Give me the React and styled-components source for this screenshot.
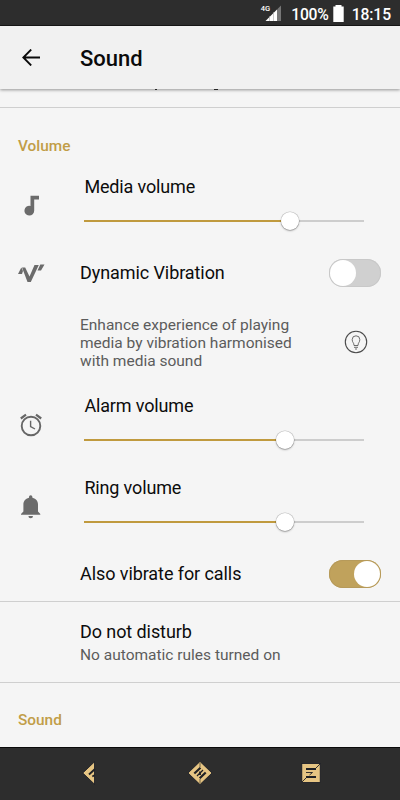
import React from "react";
import styled, { createGlobalStyle } from "styled-components";

const App = () => {
  return (
    <>
      <GlobalStyle />
      <Screen>
        <StatusBar>
          <Network>
            <span>4G</span>
            <SignalIcon />
          </Network>
          <Percent>100%</Percent>
          <BatteryIcon />
          <Clock>18:15</Clock>
        </StatusBar>

        <Header>
          <BackIcon />
          <h1>Sound</h1>
        </Header>

        <Contents>
          <ScrolledRow>
            <Descender $left={155} $width={2} />
            <Descender $left={214} $width={4} />
          </ScrolledRow>

          <Category>Volume</Category>
          <VolumeRow icon={<NoteIcon />} label="Media volume" value={205} />
          <SwitchRow>
            <IconCell>
              <WaveIcon />
            </IconCell>
            <Title>Dynamic Vibration</Title>
            <Switch>
              <Knob />
            </Switch>
          </SwitchRow>
          <DescriptionRow>
            <p>
              Enhance experience of playing
              <br />
              media by vibration harmonised
              <br />
              with media sound
            </p>
            <BulbIcon />
          </DescriptionRow>
          <VolumeRow icon={<AlarmIcon />} label="Alarm volume" value={200} />
          <VolumeRow icon={<BellIcon />} label="Ring volume" value={200} />
          <SwitchRow $line>
            <IconCell />
            <Title>Also vibrate for calls</Title>
            <Switch $on>
              <Knob />
            </Switch>
          </SwitchRow>
          <LinkRow>
            <Title>Do not disturb</Title>
            <Summary>No automatic rules turned on</Summary>
          </LinkRow>
          <Category $last>Sound</Category>
        </Contents>

        <NavBar>
          <NavBack />
          <NavHome />
          <NavRecent />
        </NavBar>
      </Screen>
    </>
  );
};

export default App;

const VolumeRow = ({ icon, label, value }) => (
  <VolumeWrap>
    <IconCell>{icon}</IconCell>
    <VolumeBody>
      <VolumeTitle>{label}</VolumeTitle>
      <Track>
        <Filled style={{ width: value }} />
        <Thumb />
      </Track>
    </VolumeBody>
  </VolumeWrap>
);

const SignalIcon = () => (
  <svg width="17" height="16" viewBox="0 0 17 16">
    <path d="M12 4.5 16 0.5V16H12Z" fill="#777" />
    <path d="M0.5 16 12 4.5V16Z" fill="#fff" />
    <path d="M4.5 11V16M8.5 7V16" stroke="#aaa" strokeWidth="0.6" />
  </svg>
);

const BatteryIcon = () => (
  <svg width="11" height="18" viewBox="0 -1 11 18">
    <path d="M2.5 0H8.5V1.5H10.7V17H0.3V1.5H2.5Z" fill="#fff" />
  </svg>
);

const BackIcon = () => (
  <svg width="18" height="17" viewBox="0 0 18 17" fill="none">
    <path d="M18 8.5H1.5M9.2 0.5 1.3 8.5 9.2 16.5" stroke="#0a0a0a" strokeWidth="1.8" />
  </svg>
);

const NoteIcon = () => (
  <svg width="26" height="26" viewBox="0 0 26 26">
    <path
      d="M12.5 2.7H21V6.5H16.2V17.5A4.9 4.9 0 1 1 12.5 12.9Z"
      fill="#6b6b6b"
    />
  </svg>
);

const WaveIcon = () => (
  <svg width="27" height="20" viewBox="0 0 27 20">
    <path
      d="M0 11 3.3 4.5 5 8 4 11ZM4 4.5H7.2L11.5 13.5 16.5 2H20.8L12.8 19H9.5ZM19.5 7.5 22.3 1.5H26.5L23 7.5Z"
      fill="#6b6b6b"
    />
  </svg>
);

const AlarmIcon = () => (
  <svg width="26" height="26" viewBox="0 0 26 26" fill="none" stroke="#666">
    <circle cx="13" cy="14" r="9.3" strokeWidth="1.9" />
    <path d="M12.6 8.7V14.5L17 17" strokeWidth="1.4" />
    <path d="M2.8 6.5 8 2.7M18 2.7 23.2 6.5" strokeWidth="2.2" />
  </svg>
);

const BellIcon = () => (
  <svg width="26" height="26" viewBox="0 0 26 26">
    <path
      d="M11 3A1.7 1.7 0 0 1 14.4 3V3.7C18.3 4.5 20 7.3 20 10.5V17.5L22.3 20V20.8H3V20L5.4 17.5V10.5C5.4 7.3 7.2 4.5 11 3.7ZM10.4 22H15A2.3 2.3 0 0 1 10.4 22Z"
      fill="#6b6b6b"
    />
  </svg>
);

const BulbIcon = () => (
  <svg width="24" height="24" viewBox="0 0 24 24" fill="none" stroke="#4a4a4a">
    <circle cx="12" cy="12" r="10.7" strokeWidth="1.1" />
    <path
      d="M10 15.5C10 12.5 8.2 12.5 8.2 9.6A3.8 3.8 0 0 1 15.8 9.6C15.8 12.5 14 12.5 14 15.5ZM10 17.3H14M11 19H13"
      strokeWidth="0.8"
    />
  </svg>
);

const NavBack = () => (
  <svg width="14" height="24" viewBox="0 0 14 24">
    <path d="M12.5 0.8V23.2L0.8 12Z" fill="#e6c583" stroke="#111522" strokeWidth="0.8" />
    <path d="M13 8 7 13.5M13 14 10.3 15.5" stroke="#202125" strokeWidth="1.9" />
  </svg>
);

const NavHome = () => (
  <svg width="26" height="24" viewBox="0 0 26 24">
    <path d="M13 0.5 25 12 13 23.5 1 12Z" fill="#e6c583" stroke="#111522" strokeWidth="0.8" />
    <path d="M13 1V6M13 18V23" stroke="#8f7c55" strokeWidth="1.4" />
    <path
      d="M7.3 12.5 13.5 6.8M12.7 17.2 18.7 11.5"
      stroke="#202125"
      strokeWidth="2.2"
    />
    <path d="M10 15 12.7 12.3V10.5M13.3 14V11.8L16 9" stroke="#202125" strokeWidth="1.3" fill="none" />
  </svg>
);

const NavRecent = () => (
  <svg width="20" height="20" viewBox="0 0 20 20">
    <rect x="0.8" y="0.5" width="18.4" height="19" fill="#e6c583" stroke="#111522" strokeWidth="0.8" />
    <path d="M1 19 5.5 14.5M14.5 5.5 19 1" stroke="#202125" strokeWidth="0.9" />
    <path d="M5 6H15M5 14H15" stroke="#202125" strokeWidth="2.2" />
    <path d="M5 9.5H11.5L8.5 12" stroke="#202125" strokeWidth="0.9" fill="none" />
  </svg>
);

const GlobalStyle = createGlobalStyle`
  * {
    box-sizing: border-box;
  }
  body, h1, h2, p {
    margin: 0;
  }
  body {
    font-family: Roboto, sans-serif;
  }
`;

const Screen = styled.div`
  display: flex;
  flex-direction: column;

  width: 400px;
  height: 800px;
  overflow: hidden;

  background-color: #f5f5f5;
`;

const StatusBar = styled.div`
  display: flex;
  flex: none;
  align-items: center;
  justify-content: flex-end;

  height: 26px;
  padding-right: 9px;

  font-size: 15.7px;
  font-weight: 500;
  color: #fff;

  background-color: #2d2d2d;
  border-bottom: 1px solid #171717;
`;

const Network = styled.div`
  display: flex;
  align-items: flex-start;

  span {
    margin-right: -5px;

    font-size: 7.5px;
    line-height: 7px;
  }
`;

const Percent = styled.span`
  margin: 3px 4px 0 9px;

  letter-spacing: -0.2px;
`;

const Clock = styled.span`
  margin: 3px 0 0 8px;

  letter-spacing: -0.1px;
`;

const Header = styled.header`
  display: flex;
  flex: none;
  align-items: center;
  gap: 40px;
  z-index: 1;

  height: 63px;
  padding: 0 0 0 22px;

  background-color: #f1f1f1;
  box-shadow: 0 1px 3px rgba(0, 0, 0, 0.4);

  h1 {
    padding-top: 2px;

    font-size: 22px;
    font-weight: 500;
    color: #0a0a0a;
  }
`;

const Contents = styled.main`
  flex: none;

  height: 658px;
  overflow: hidden;
`;

const ScrolledRow = styled.div`
  position: relative;

  height: 19px;

  border-bottom: 1px solid #cfcfcf;
`;

const Descender = styled.i`
  position: absolute;
  top: 0;
  left: ${({ $left }) => $left}px;

  width: ${({ $width }) => $width}px;
  height: 1px;

  background-color: #333;
`;

const Category = styled.h2`
  height: 57px;
  padding: ${({ $last }) => ($last ? 28 : 29)}px 0 0 18px;

  font-size: 15.4px;
  font-weight: 500;
  line-height: 18px;
  color: #c19d47;
`;

const VolumeWrap = styled.div`
  display: flex;
  align-items: center;

  height: 82px;
`;

const IconCell = styled.div`
  display: flex;
  flex: none;

  width: 80px;
  padding-left: 18px;
`;

const VolumeBody = styled.div`
  display: flex;
  flex-direction: column;
  gap: 22px;

  width: 284.4px;
  padding: 0 0 15px 4.4px;
`;

const Title = styled.div`
  font-size: 18px;
  line-height: 22px;
  letter-spacing: -0.08px;
  color: #0c0c0c;
  white-space: nowrap;
`;

const VolumeTitle = styled(Title)`
  letter-spacing: -0.15px;
`;

const Track = styled.div`
  display: flex;
  align-items: center;

  height: 2px;

  background-color: #cdcdcd;
`;

const Filled = styled.div`
  height: 2px;

  background-color: #c09a3e;
`;

const Thumb = styled.div`
  flex: none;

  width: 18px;
  height: 18px;
  margin-left: -8.6px;

  background-color: #fff;
  border-radius: 50%;
  box-shadow:
    0 0 0 0.5px rgba(0, 0, 0, 0.2),
    0 1px 2px rgba(0, 0, 0, 0.3);
`;

const SwitchRow = styled.div`
  display: flex;
  align-items: center;

  height: ${({ $line }) => ($line ? 54 : 52)}px;
  padding-right: 19px;
  padding-bottom: ${({ $line }) => ($line ? 1 : 0)}px;

  border-bottom: ${({ $line }) => ($line ? "1px solid #cfcfcf" : "none")};
`;

const Switch = styled.div`
  display: flex;
  justify-content: ${({ $on }) => ($on ? "flex-end" : "flex-start")};

  width: 52px;
  height: 28px;
  margin-left: auto;
  padding: 1px;

  background-color: ${({ $on }) => ($on ? "#c0a25c" : "#d0d0d0")};
  border-radius: 14px;
  box-shadow: inset 0 0 0 1px ${({ $on }) => ($on ? "#b69a5a" : "#c8c8c8")};
`;

const Knob = styled.div`
  width: 26px;
  height: 26px;

  background-color: #fff;
  border-radius: 50%;
`;

const DescriptionRow = styled.div`
  display: flex;
  align-items: center;
  justify-content: space-between;

  height: 85px;
  padding: 0 32.5px 0 80px;

  p {
    padding-top: 2px;

    font-size: 15.5px;
    line-height: 18px;
    color: #5c5c5c;
    white-space: nowrap;
  }
`;

const LinkRow = styled.div`
  height: 81px;
  padding: 19px 0 0 80px;

  border-bottom: 1px solid #cfcfcf;
`;

const Summary = styled.div`
  margin-top: 2px;

  font-size: 15.5px;
  line-height: 20px;
  color: #5c5c5c;
`;

const NavBar = styled.nav`
  display: flex;
  flex: none;
  align-items: center;
  justify-content: space-between;

  height: 53px;
  padding: 0 79px 2px 82px;

  background-color: #2d2d2d;
  border-top: 1px solid #0a0a0a;

  svg:nth-child(2) {
    margin-left: 3px;
  }
`;
